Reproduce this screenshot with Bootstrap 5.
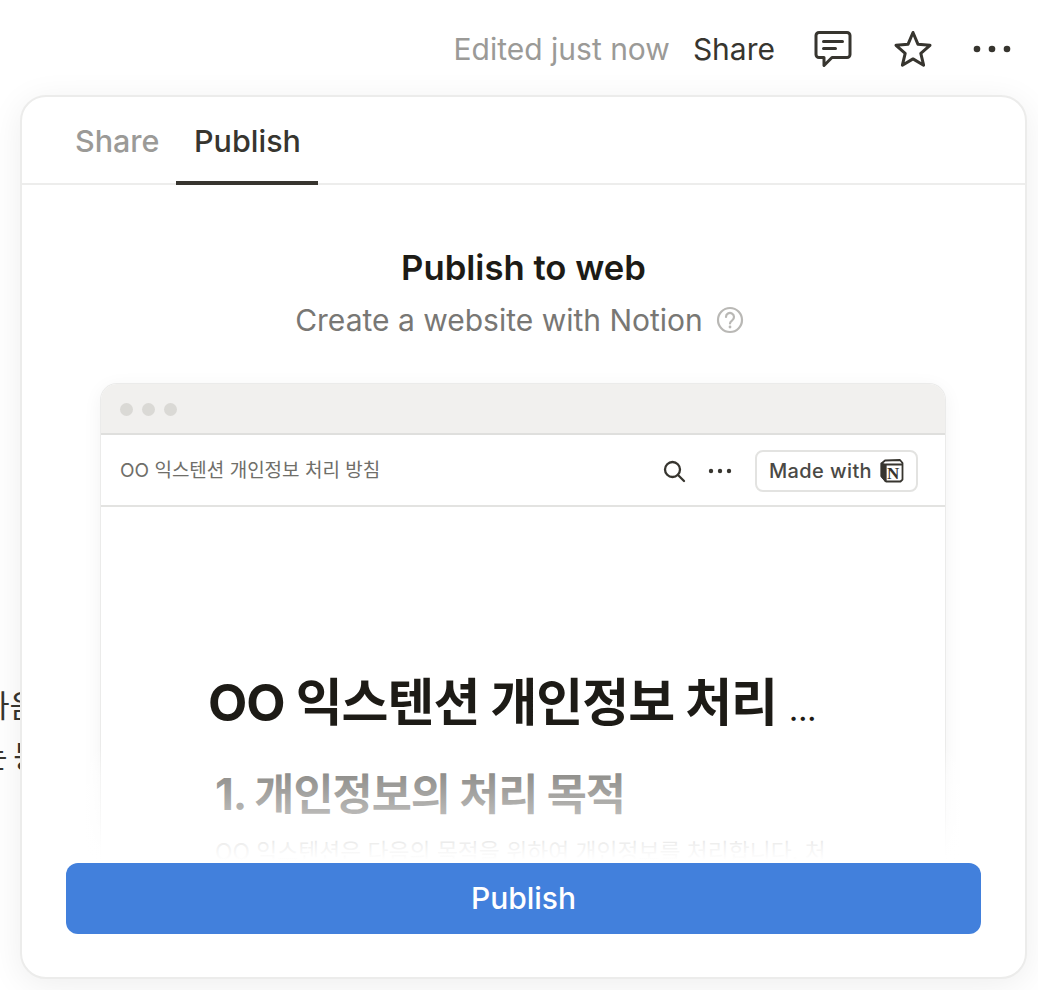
<!DOCTYPE html>
<html lang="en">

<head>
    <meta charset="UTF-8">
    <meta name="viewport" content="width=device-width, initial-scale=1.0">
    <title>Publish to web</title>
    <link href="https://cdn.jsdelivr.net/npm/bootstrap@5.3.3/dist/css/bootstrap.min.css" rel="stylesheet" />
    <style>
        html, body { height: 100%; }
        body {
            font-family: Inter, "Noto Sans CJK KR", sans-serif;
            background: #fff;
            color: #37352f;
            overflow: hidden;
        }

        .page-wrap { position: relative; width: 1038px; height: 990px; overflow: hidden; }

        /* 뒤쪽 문서 글자 */
        .behind-text {
            position: absolute;
            left: 0;
            top: 680px;
            font-size: 31px;
            line-height: 51px;
            white-space: nowrap;
            color: #37352f;
        }
        .behind-one { margin-left: -19px; }
        .behind-two { margin-left: -21px; word-spacing: -3px; }

        /* 상단 바 */
        .top-bar { height: 98px; padding: 0 26px 0 0; }
        .edited-label { font-size: 30px; color: #9b9a97; margin-right: 23px; }
        .share-label { font-size: 30px; color: #37352f; margin-right: 38px; }
        .comment-icon { width: 40px; height: 40px; margin-right: 40px; }
        .star-icon { width: 40px; height: 40px; margin-right: 39px; }
        .more-icon { width: 40px; height: 10px; }

        /* 패널 */
        .publish-panel {
            position: absolute;
            left: 20px;
            top: 95px;
            width: 1007px;
            height: 884px;
            background: #fff;
            border: 2px solid #ececeb;
            border-radius: 26px;
            box-shadow: 0 6px 34px rgba(15, 15, 15, 0.07);
            overflow: hidden;
        }

        .tab-row { height: 88px; border-bottom: 2px solid #ededec; padding-left: 34px; }
        .tab-item { font-size: 30.5px; height: 88px; line-height: 87px; font-weight: 500; color: #9b9a97; }
        .tab-item.tab-on { color: #37352f; border-bottom: 4px solid #37352f; padding: 0 18px; width: 142px; }
        .tab-share { width: 120px; padding: 0 0 0 19px; }

        .panel-body { position: relative; overflow: hidden; height: 675px; }
        .publish-title { font-size: 34.7px; font-weight: 600; color: #1d1b16; margin: 0; line-height: 40px; padding-top: 62px; text-align: center; }
        .publish-sub { font-size: 30px; color: #787774; line-height: 40px; margin-top: 13px; padding-right: 8px; }
        .help-icon { width: 28px; height: 28px; margin-left: 13px; }

        /* 미리보기 창 */
        .preview-window {
            width: 844px;
            margin: 44px 0 0 79px;
            height: 700px;
            border-radius: 16px 16px 0 0;
            background: #fff;
            box-shadow: 0 0 0 1px #ebebea, 0 4px 20px rgba(15, 15, 15, 0.06);
            overflow: hidden;
        }
        .window-bar { height: 51px; background: #f1f0ee; border-bottom: 2px solid #dfdfdd; padding: 1px 0 0 19px; gap: 9px; }
        .window-dot { width: 13px; height: 13px; border-radius: 50%; background: #dad9d5; }
        .site-bar { height: 72px; border-bottom: 2px solid #e3e3e1; padding: 2px 27px 0 19px; }
        .site-name { font-size: 19px; color: #6f6e69; }
        .search-icon { width: 24px; height: 24px; margin-right: 22px; }
        .dots-small { width: 24px; height: 6px; margin-right: 23px; }
        .made-with {
            height: 42px;
            width: 163px;
            border: 2px solid #e3e3e1;
            border-radius: 8px;
            font-size: 20px;
            font-weight: 500;
            letter-spacing: .4px;
            color: #4a4945;
            gap: 8px;
        }
        .notion-logo { width: 24px; height: 24px; }
        .notion-n { font-family: "Liberation Serif", serif; font-size: 17px; font-weight: 700; fill: #37352f; }

        .doc-body { padding: 166px 0 0 107px; }
        .doc-title { font-size: 51px; font-weight: 700; line-height: 60px; letter-spacing: -1px; color: #1d1b16; margin: 0; white-space: nowrap; }
        .doc-title span { font-size: 30px; font-weight: 500; letter-spacing: 0; margin-left: 1px; }
        .doc-head2 { font-size: 43.6px; font-weight: 700; line-height: 52px; letter-spacing: -1px; color: #37352f; margin: 29px 0 0 7px; white-space: nowrap; }
        .doc-para { font-size: 22.8px; line-height: 30px; color: #37352f; margin: 16px 0 0 7px; white-space: nowrap; }

        /* 아래로 갈수록 흐려지는 부분 */
        .fade-cover {
            position: absolute;
            left: 0;
            right: 0;
            bottom: 0;
            height: 115px;
            background: linear-gradient(to bottom, rgba(255, 255, 255, 0) 0%, rgba(255, 255, 255, .45) 26%, rgba(255, 255, 255, .66) 61%, rgba(255, 255, 255, .93) 87%, #fff 100%);
        }

        .panel-foot { padding: 3px 44px 0 44px; }
        .publish-btn {
            display: block;
            width: 100%;
            height: 71px;
            background: #4280dc;
            border: 0;
            border-radius: 12px;
            color: #fff;
            font-size: 30px;
            font-weight: 500;
        }
        .publish-btn:hover { background: #3a74c9; color: #fff; }
    </style>
</head>

<body>
    <div class="page-wrap">
        <div class="behind-text">
            <div class="behind-one">다음</div>
            <div class="behind-two">는 등</div>
        </div>

        <!-- 상단 바 -->
        <div class="top-bar d-flex justify-content-end align-items-center">
            <span class="edited-label">Edited just now</span>
            <span class="share-label">Share</span>
            <svg class="comment-icon" viewBox="0 0 40 40" fill="none" stroke="#37352f" stroke-width="3" stroke-linejoin="round" stroke-linecap="round">
                <path d="M3 6.500a3 3 0 0 1 3-3h28a3 3 0 0 1 3 3v19a3 3 0 0 1-3 3H19l-8 8v-8H6a3 3 0 0 1-3-3z" />
                <path d="M10.500 12.500h19M10.500 19.500h12" />
            </svg>
            <svg class="star-icon" viewBox="0 0 40 40" fill="none" stroke="#37352f" stroke-width="3" stroke-linejoin="round">
                <path d="M20 3.500l4.900 11.700 12.100 1.100-9.200 8 2.800 11.900L20 29.900 9.400 36.200l2.800-11.900-9.200-8 12.100-1.100z" />
            </svg>
            <svg class="more-icon" viewBox="0 0 40 10" fill="#37352f">
                <circle cx="5" cy="5" r="3.300" /><circle cx="20" cy="5" r="3.300" /><circle cx="35" cy="5" r="3.300" />
            </svg>
        </div>

        <!-- 패널 -->
        <div class="publish-panel">
            <div class="tab-row d-flex">
                <div class="tab-item tab-share">Share</div>
                <div class="tab-item tab-on">Publish</div>
            </div>

            <div class="panel-body">
                <h2 class="publish-title">Publish to web</h2>
                <div class="publish-sub d-flex justify-content-center align-items-center">
                    <span>Create a website with Notion</span>
                    <svg class="help-icon" viewBox="0 0 28 28" fill="none" stroke="#b9b8b5" stroke-width="2.200">
                        <circle cx="14" cy="14" r="12" />
                        <path d="M10 11a4 4 0 1 1 6.200 3.300c-1.500 1-2.200 1.600-2.200 3.200" stroke-linecap="round" />
                        <circle cx="14" cy="21" r="1.400" fill="#b9b8b5" stroke="none" />
                    </svg>
                </div>

                <div class="preview-window">
                    <div class="window-bar d-flex align-items-center">
                        <div class="window-dot"></div>
                        <div class="window-dot"></div>
                        <div class="window-dot"></div>
                    </div>
                    <div class="site-bar d-flex align-items-center">
                        <span class="site-name me-auto">OO 익스텐션 개인정보 처리 방침</span>
                        <svg class="search-icon" viewBox="0 0 24 24" fill="none" stroke="#37352f" stroke-width="2.300" stroke-linecap="round">
                            <circle cx="10.500" cy="10.500" r="7.500" />
                            <path d="M16 16l6 6" />
                        </svg>
                        <svg class="dots-small" viewBox="0 0 24 6" fill="#37352f">
                            <circle cx="3" cy="3" r="2.200" /><circle cx="12" cy="3" r="2.200" /><circle cx="21" cy="3" r="2.200" />
                        </svg>
                        <div class="made-with d-flex align-items-center justify-content-center">
                            <span>Made with</span>
                            <svg class="notion-logo" viewBox="0 0 24 24" fill="none" stroke="#37352f" stroke-width="1.800" stroke-linejoin="round">
                                <path d="M1.500 4.500L5 1.500l15 -.5 2.500 3v16.500l-2 2H6l-4.500 -5z" />
                                <path d="M5.500 5.500h17M5.500 5.500V22.500" />
                                <path d="M1.500 4.500l4 1V22L1.500 17z" fill="#37352f" />
                                <text class="notion-n" x="7" y="19.500" stroke="none">N</text>
                            </svg>
                        </div>
                    </div>
                    <div class="doc-body">
                        <h1 class="doc-title">OO 익스텐션 개인정보 처리 <span>...</span></h1>
                        <h2 class="doc-head2">1. 개인정보의 처리 목적</h2>
                        <p class="doc-para">OO 익스텐션은 다음의 목적을 위하여 개인정보를 처리합니다. 처</p>
                    </div>
                </div>
                <div class="fade-cover"></div>
            </div>

            <div class="panel-foot">
                <button type="button" class="btn publish-btn">Publish</button>
            </div>
        </div>
    </div>

    <script src="https://cdn.jsdelivr.net/npm/bootstrap@5.3.3/dist/js/bootstrap.bundle.min.js"></script>
</body>

</html>
